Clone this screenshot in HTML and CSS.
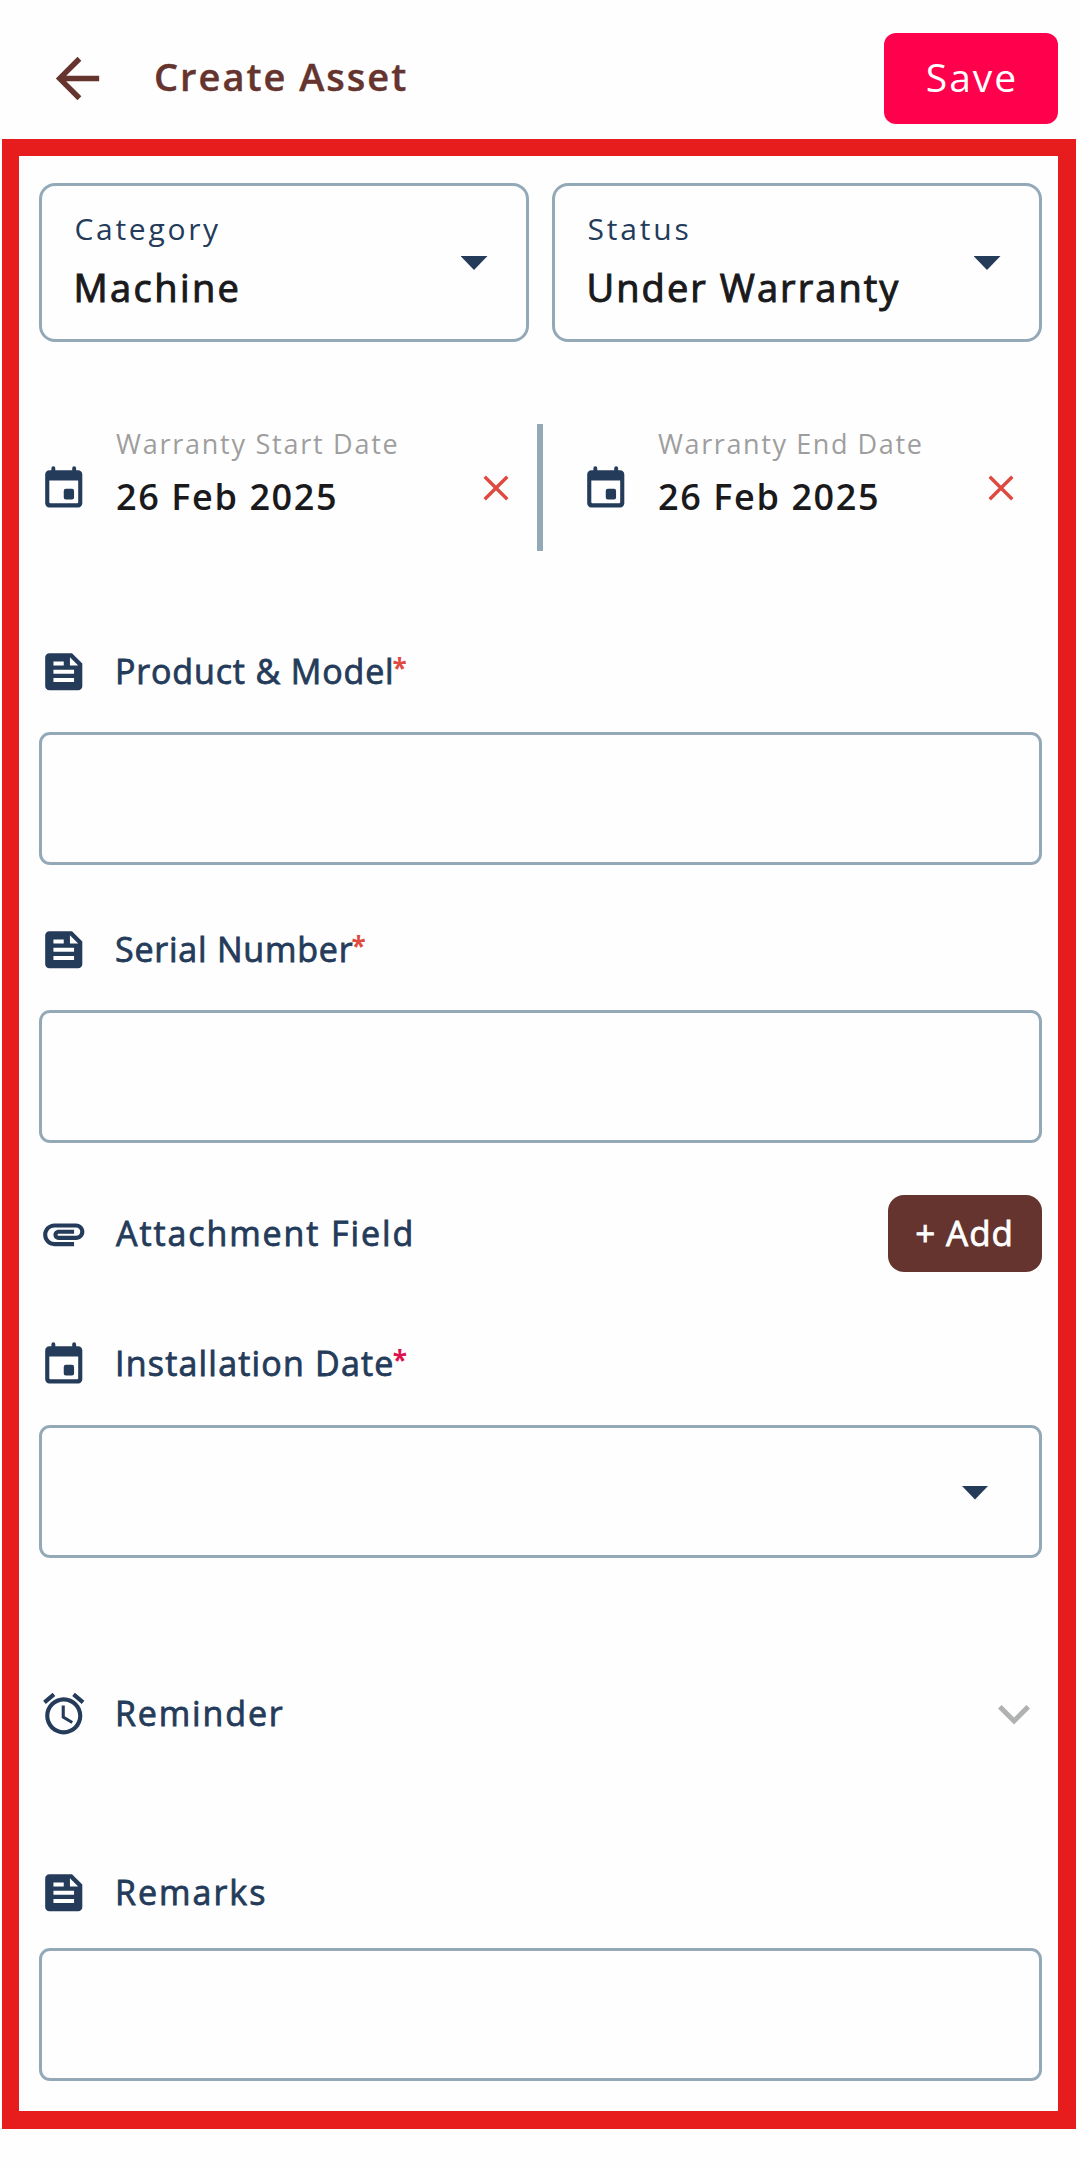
FILE: index.html
```html
<!DOCTYPE html>
<html lang="en">
<head>
<meta charset="utf-8">
<title>Create Asset</title>
<link rel="stylesheet" href="styles.css">
</head>
<body>
<svg class="defs" width="0" height="0" aria-hidden="true">
  <symbol id="doc" viewBox="0 0 24 24"><path fill-rule="evenodd" d="M5 3h11l5 5v11a2 2 0 0 1-2 2H5a2 2 0 0 1-2-2V5a2 2 0 0 1 2-2zM7 7v2h5V7zM7 11v2h10v-2zM7 15v2h10v-2zM15 5v4h4z"/></symbol>
  <symbol id="event" viewBox="0 0 24 24"><path fill-rule="evenodd" d="M6 4V3a.95.95 0 0 1 1.9 0v1h8.200V3a.95.95 0 0 1 1.900 0v1h1a2 2 0 0 1 2 2v14a2 2 0 0 1-2 2H5a2 2 0 0 1-2-2V6a2 2 0 0 1 2-2zM5 9v10.500a.5.5 0 0 0 .5.5h13a.5.5 0 0 0 .5-.5V9zM13 13h3a1 1 0 0 1 1 1v3.200a1 1 0 0 1-1 1h-3a1 1 0 0 1-1-1V14a1 1 0 0 1 1-1z"/></symbol>
  <symbol id="close" viewBox="0 0 26 26"><path d="M1.700 1.700l22.600 22.600M24.300 1.700L1.700 24.300" fill="none" stroke="currentColor" stroke-width="3.400"/></symbol>
</svg>

<header class="topbar">
  <svg class="back" viewBox="0 0 24 24"><path d="M20 11H7.830l5.590-5.590L12 4l-8 8 8 8 1.410-1.410L7.830 13H20v-2z"/></svg>
  <h1 class="title">Create Asset</h1>
  <button class="save">Save</button>
</header>

<main class="form">
  <div class="selects">
    <div class="select">
      <div><div class="select-label">Category</div><div class="select-value">Machine</div></div>
      <span class="caret"></span>
    </div>
    <div class="select">
      <div><div class="select-label status">Status</div><div class="select-value warranty">Under Warranty</div></div>
      <span class="caret"></span>
    </div>
  </div>

  <div class="dates">
    <div class="date">
      <svg class="icon"><use href="#event"/></svg>
      <div class="date-text"><div class="date-label">Warranty Start Date</div><div class="date-value">26 Feb 2025</div></div>
      <svg class="clear"><use href="#close"/></svg>
    </div>
    <div class="divider"></div>
    <div class="date date-end">
      <svg class="icon"><use href="#event"/></svg>
      <div class="date-text"><div class="date-label end">Warranty End Date</div><div class="date-value">26 Feb 2025</div></div>
      <svg class="clear"><use href="#close"/></svg>
    </div>
  </div>

  <div class="row product"><svg class="icon"><use href="#doc"/></svg><span class="label">Product &amp; Model<span class="req">*</span></span></div>
  <div class="input"></div>

  <div class="row serial"><svg class="icon"><use href="#doc"/></svg><span class="label">Serial Number<span class="req">*</span></span></div>
  <div class="input"></div>

  <div class="row attachment">
    <svg class="icon" viewBox="0 0 24 24"><path d="M2 12.500C2 9.460 4.460 7 7.500 7H18c2.210 0 4 1.790 4 4s-1.790 4-4 4H9.500C8.120 15 7 13.880 7 12.500S8.120 10 9.500 10H17v2H9.410c-.55 0-.55 1 0 1H18c1.100 0 2-.9 2-2s-.9-2-2-2H7.500C5.570 9 4 10.570 4 12.500S5.570 16 7.500 16H17v2H7.500C4.460 18 2 15.540 2 12.500z"/></svg>
    <span class="label">Attachment Field</span>
    <button class="add">+ Add</button>
  </div>

  <div class="row installation"><svg class="icon"><use href="#event"/></svg><span class="label">Installation Date<span class="req pink">*</span></span></div>
  <div class="input date-input"><span class="caret"></span></div>

  <div class="row reminder">
    <svg class="icon" viewBox="0 0 24 24"><path d="M22 5.720l-4.600-3.860-1.290 1.530 4.600 3.860L22 5.720zM7.880 3.390L6.600 1.860 2 5.710l1.290 1.530 4.590-3.850zM12.500 8H11v6l4.750 2.850.75-1.230-4-2.370V8zM12 4c-4.970 0-9 4.030-9 9s4.020 9 9 9c4.970 0 9-4.030 9-9s-4.030-9-9-9zm0 16c-3.870 0-7-3.130-7-7s3.130-7 7-7 7 3.130 7 7-3.130 7-7 7z"/></svg>
    <span class="label">Reminder</span>
    <svg class="chevron" viewBox="0 0 32 20"><path d="M1.800 1.800L16 16l14.200-14.200" fill="none" stroke="currentColor" stroke-width="5"/></svg>
  </div>

  <div class="row remarks"><svg class="icon"><use href="#doc"/></svg><span class="label">Remarks</span></div>
  <div class="input"></div>
</main>
</body>
</html>
```
FILE: styles.css
```css
* { box-sizing: border-box; }

body {
  margin: 0;
  background: #fefefe;
  color: #243b5a;
  font-family: "Open Sans", "Noto Sans", sans-serif;
}

button { border: 0; padding: 0; font-family: inherit; }

.defs { display: block; position: absolute; }

.topbar {
  display: flex;
  align-items: center;
  height: 139px;
  padding: 17px 22px 0 45px;
}
.back { width: 65px; height: 65px; fill: #65342e; }
.title {
  flex: 1;
  margin: 0 0 5px 44px;
  color: #65342e;
  font-size: 38px;
  font-weight: 600;
  letter-spacing: 2px;
  -webkit-text-stroke: 0.4px;
}
.save {
  width: 174px;
  height: 91px;
  border-radius: 12px;
  background: #ff004d;
  color: #fff;
  font-size: 39px;
  letter-spacing: 2px;
  padding: 0 0 4px 2px;
}

.form {
  margin-left: 2px;
  width: 1074px;
  height: 1990px;
  border: 17px solid #e71d1d;
  border-right-width: 18px;
  border-bottom-width: 18px;
  padding: 27px 16.5px 0 19.5px;
}

.selects { display: grid; grid-template-columns: 490px 490px; justify-content: space-between; }
.select {
  display: flex;
  justify-content: space-between;
  height: 159px;
  border: 3px solid #94a9b8;
  border-radius: 16px;
  padding: 24px 38px 0 33px;
}
.select-label { font-size: 30px; line-height: 38px; letter-spacing: 2.7px; }
.select-label.status { letter-spacing: 2.8px; }
.select-value { margin: 13px 0 0 -1px; font-size: 38px; line-height: 52px; letter-spacing: 2.4px; color: #1a1a1c; -webkit-text-stroke: 1px; }
.select-value.warranty { letter-spacing: 2.05px; }

.caret {
  width: 27px;
  height: 14px;
  background: #243b5a;
  clip-path: polygon(0 0, 100% 0, 50% 100%);
}
.select .caret { margin-top: 46px; }

.dates { display: grid; grid-template-columns: 498px 6px 1fr; height: 127px; margin-top: 82px; }
.divider { background: #94a9b8; }
.date { display: flex; align-items: center; padding-right: 28px; }
.date-end { padding-left: 38px; }
.date .icon { margin-bottom: 2px; }
.date-text { flex: 1; align-self: flex-start; margin: 2px 0 0 28px; white-space: nowrap; }
.date-label { font-size: 27px; line-height: 36px; letter-spacing: 1.75px; color: #9e9e9e; }
.date-label.end { letter-spacing: 1.6px; }
.date-value { margin-top: 11px; font-size: 36px; line-height: 48px; font-weight: 600; letter-spacing: 1.6px; color: #1a1a1c; }
.clear { width: 26px; height: 26px; color: #dc4a40; }

.icon { flex: none; width: 49.5px; height: 49.5px; fill: #243b5a; }

.row { display: flex; align-items: center; height: 50px; }
.label { margin: 0 0 2px 27px; font-size: 34px; line-height: 46px; white-space: nowrap; -webkit-text-stroke: 0.8px; }
.req { margin-left: -2px; font-size: 26px; line-height: 0; font-weight: 700; letter-spacing: 0; vertical-align: 6px; color: #e04a40; -webkit-text-stroke: 0; }
.req.pink { color: #e0104f; }

.product { margin-top: 96px; }
.product .label { letter-spacing: 0.85px; }
.serial { margin-top: 60px; }
.serial .label { letter-spacing: 0.78px; }
.attachment { height: 77px; margin-top: 52px; }
.attachment .label { flex: 1; margin-left: 28px; letter-spacing: 1.9px; }
.installation { margin-top: 66px; }
.installation .label { margin-bottom: 0; letter-spacing: 1.2px; }
.reminder { margin-top: 131px; padding-right: 12px; }
.reminder .label { flex: 1; letter-spacing: 1.85px; }
.remarks { margin-top: 129px; }
.remarks .label { letter-spacing: 2px; }

.input { height: 133px; margin-top: 35px; border: 3px solid #94a9b8; border-radius: 11px; }
.installation + .input { margin-top: 37px; }
.remarks + .input { margin-top: 30px; }
.date-input { display: flex; justify-content: flex-end; align-items: center; padding: 2px 50px 0 0; }

.add {
  width: 154px;
  height: 77px;
  border-radius: 16px;
  background: #65342e;
  color: #fff;
  font-size: 35px;
  letter-spacing: 0.9px;
  padding-bottom: 2px;
  -webkit-text-stroke: 0.8px;
}
.chevron { width: 32px; height: 20px; margin-top: 1px; color: #b0b1b1; }
```
